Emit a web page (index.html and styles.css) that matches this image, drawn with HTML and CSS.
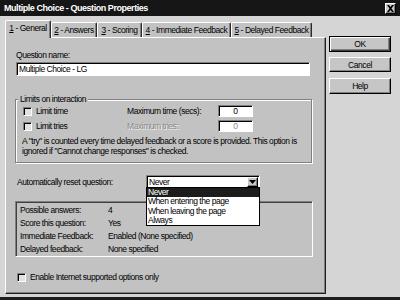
FILE: index.html
```html
<!DOCTYPE html>
<html>
<head>
<meta charset="utf-8">
<title>Multiple Choice - Question Properties</title>
<link rel="stylesheet" href="styles.css">
</head>
<body>
<div class="dialog">
  <div class="titlebar">
    <span class="title">Multiple Choice - Question Properties</span>
    <span class="close"><svg width="9" height="7" viewBox="0 0 9 7"><path d="M1 0h2l1.5 2 1.5-2h2l-2.5 3.5 2.5 3.5h-2l-1.5-2-1.5 2h-2l2.5-3.5z" fill="#000"/></svg></span>
  </div>
  <div class="main">
    <div class="sheet">
      <div class="tabs">
        <div class="tab active t1"><u>1</u> - General</div>
        <div class="tab t2"><u>2</u> - Answers</div>
        <div class="tab t3"><u>3</u> - Scoring</div>
        <div class="tab t4"><u>4</u> - Immediate Feedback</div>
        <div class="tab t5"><u>5</u> - Delayed Feedback</div>
      </div>
      <div class="panel">
        <div class="qlabel">Question name:</div>
        <div class="textbox qname">Multiple Choice - LG</div>
        <div class="group">
          <div class="legend">Limits on interaction</div>
          <div class="lrow">
            <span class="chk"><span class="cb"></span><span>Limit time</span></span>
            <span class="mlabel">Maximum time (secs):</span>
            <span class="numbox">0</span>
          </div>
          <div class="lrow second">
            <span class="chk"><span class="cb"></span><span>Limit tries</span></span>
            <span class="mlabel disabled">Maximum tries:</span>
            <span class="numbox dis">0</span>
          </div>
          <p class="note">A "try" is counted every time delayed feedback or a score is provided. This option is<br>ignored if "Cannot change responses" is checked.</p>
        </div>
        <div class="resetrow">
          <span class="rlabel">Automatically reset question:</span>
          <div class="combo">
            <span class="cval">Never</span>
            <span class="arrow"><svg width="7" height="4" viewBox="0 0 7 4"><path d="M0 0h7l-3.5 4z" fill="#000"/></svg></span>
            <ul class="droplist">
              <li class="sel">Never</li>
              <li>When entering the page</li>
              <li>When leaving the page</li>
              <li>Always</li>
            </ul>
          </div>
        </div>
        <div class="info">
          <div class="irow"><span class="k">Possible answers:</span><span>4</span></div>
          <div class="irow"><span class="k">Score this question:</span><span>Yes</span></div>
          <div class="irow"><span class="k">Immediate Feedback:</span><span>Enabled (None specified)</span></div>
          <div class="irow"><span class="k">Delayed feedback:</span><span>None specified</span></div>
        </div>
        <div class="cbrow"><span class="cb"></span><span>Enable Internet supported options only</span></div>
      </div>
    </div>
    <div class="buttons">
      <div class="btn ok">OK</div>
      <div class="btn cancel">Cancel</div>
      <div class="btn help">Help</div>
    </div>
  </div>
</div>
</body>
</html>
```
FILE: styles.css
```css
* { box-sizing: border-box; }
html, body { margin: 0; padding: 0; }
body {
  width: 400px;
  height: 300px;
  overflow: hidden;
  font-family: "Liberation Sans", Arial, sans-serif;
  font-size: 8.5px;
  line-height: 10px;
  letter-spacing: -0.45px;
  color: #000;
  background: #d4d4d4;
}
.dialog {
  width: 400px;
  height: 300px;
  display: flex;
  flex-direction: column;
  background: #d5d5d5;
  border-bottom: 3px solid #1e1e1e;
}
.titlebar {
  height: 16px;
  flex: none;
  background: #161616;
  display: flex;
  align-items: center;
  justify-content: space-between;
  padding: 0 4px 0 4px;
}
.title {
  color: #fff;
  font-weight: bold;
  font-size: 9px;
  letter-spacing: -0.45px;
}
.close {
  width: 11px;
  height: 11px;
  background: #c8c8c8;
  border: 1px solid;
  border-color: #fff #000 #000 #fff;
  box-shadow: inset -1px -1px #808080;
  display: flex;
  align-items: center;
  justify-content: center;
}
.close svg { display: block; margin-left: -1px; }
.main {
  flex: 1;
  display: flex;
  padding: 4px 0 0 5px;
}
.sheet {
  width: 321px;
  display: flex;
  flex-direction: column;
}
.tabs {
  height: 17px;
  display: flex;
  align-items: flex-end;
}
.tab {
  height: 15px;
  background: #c2c2c2;
  border-left: 1px solid #fff;
  border-top: 1px solid #fff;
  border-right: 1px solid #2a2a2a;
  box-shadow: inset -1px 0 #808080;
  border-radius: 2px 2px 0 0;
  padding-top: 2px;
  text-align: center;
  white-space: nowrap;
}
.tab.active {
  height: 18px;
  margin-bottom: -1px;
  position: relative;
  z-index: 2;
}
.t1 { width: 46px; }
.t2 { width: 46px; }
.t3 { width: 45px; }
.t4 { width: 89px; }
.t5 { width: 81px; }
.panel {
  height: 257px;
  background: #c2c2c2;
  border: 1px solid;
  border-color: #fff #1e1e1e #1e1e1e #fff;
  box-shadow: inset -1px -1px #808080;
  padding: 12px 0 0 10px;
}
.qlabel { height: 10px; }
.textbox {
  background: #fff;
  border: 1px solid;
  border-color: #808080 #fff #fff #808080;
  box-shadow: inset 1px 1px #000;
}
.qname {
  margin-top: 2px;
  width: 294px;
  height: 14px;
  padding-left: 2px;
  line-height: 12px;
}
.group {
  margin-top: 23px;
  margin-left: -1px;
  width: 297px;
  border: 1px solid #808080;
  box-shadow: inset 1px 1px #fff, 1px 1px #fff;
  padding: 0 0 6px 6px;
}
.legend {
  width: fit-content;
  height: 10px;
  margin: -6px 0 0 -4px;
  padding: 0 2px;
  background: #c2c2c2;
}
.lrow {
  display: flex;
  align-items: center;
  height: 12px;
  margin-top: 1px;
}
.lrow.second { margin-top: 3px; }
.chk {
  width: 105px;
  display: flex;
  align-items: center;
  gap: 4px;
}
.cb {
  width: 9px;
  height: 9px;
  flex: none;
  background: #e2e2e2;
  border: 1px solid;
  border-color: #808080 #fff #fff #808080;
  box-shadow: inset 1px 1px #000;
}
.chk .cb { margin-left: 1px; }
.mlabel { width: 91px; }
.disabled {
  color: #8a8a8a;
  text-shadow: 1px 1px #f0f0f0;
}
.numbox {
  width: 35px;
  height: 12px;
  background: #fff;
  border: 1px solid;
  border-color: #808080 #fff #fff #808080;
  box-shadow: inset 1px 1px #000;
  text-align: center;
  line-height: 10px;
}
.numbox.dis { color: #8a8a8a; }
.note {
  margin: 4px 0 0 0;
  white-space: nowrap;
}
.resetrow {
  margin-top: 12px;
  height: 13px;
  display: flex;
  align-items: center;
}
.rlabel {
  margin-left: 1px;
  width: 129px;
}
.combo {
  position: relative;
  width: 114px;
  height: 13px;
  background: #fff;
  border: 1px solid;
  border-color: #808080 #fff #fff #808080;
  box-shadow: inset 1px 1px #000;
  display: flex;
  align-items: center;
  justify-content: space-between;
  padding: 1px 1px 0 2px;
}
.cval { line-height: 10px; }
.arrow {
  width: 11px;
  height: 10px;
  background: #c8c8c8;
  border: 1px solid;
  border-color: #fff #000 #000 #fff;
  box-shadow: inset -1px -1px #808080;
  display: flex;
  align-items: center;
  justify-content: center;
}
.arrow svg { display: block; }
.droplist {
  position: absolute;
  top: 100%;
  left: -1px;
  width: 114px;
  margin: 0;
  padding: 0;
  list-style: none;
  background: #fff;
  border: 1px solid #000;
  z-index: 5;
}
.droplist li {
  height: 9.3px;
  line-height: 9.3px;
  padding-left: 1px;
  white-space: nowrap;
}
.droplist li.sel {
  background: #1c1c1c;
  color: #fff;
}
.info {
  margin-top: 13px;
  margin-left: -1px;
  width: 298px;
  height: 56px;
  border: 1px solid;
  border-color: #808080 #fff #fff #808080;
  box-shadow: inset 1px 1px #404040;
  padding: 2px 0 0 4px;
}
.irow {
  display: flex;
  height: 13px;
  line-height: 13px;
}
.irow .k { width: 88px; }
.cbrow {
  margin-top: 15px;
  height: 10px;
  display: flex;
  align-items: center;
  gap: 4px;
}
.cbrow .cb { margin-left: 1px; }
.buttons {
  margin-left: 3px;
  padding-top: 16px;
  display: flex;
  flex-direction: column;
}
.btn {
  width: 62px;
  background: #c6c6c6;
  border: 1px solid;
  border-color: #fff #000 #000 #fff;
  box-shadow: inset -1px -1px #808080;
  display: flex;
  align-items: center;
  justify-content: center;
}
.btn.ok {
  height: 16px;
  border: 1px solid #000;
  box-shadow: inset 1px 1px #fff, inset -1px -1px #404040, inset -2px -2px #808080;
}
.btn.cancel { height: 15px; margin-top: 5px; }
.btn.help { height: 16px; margin-top: 6px; }
```
